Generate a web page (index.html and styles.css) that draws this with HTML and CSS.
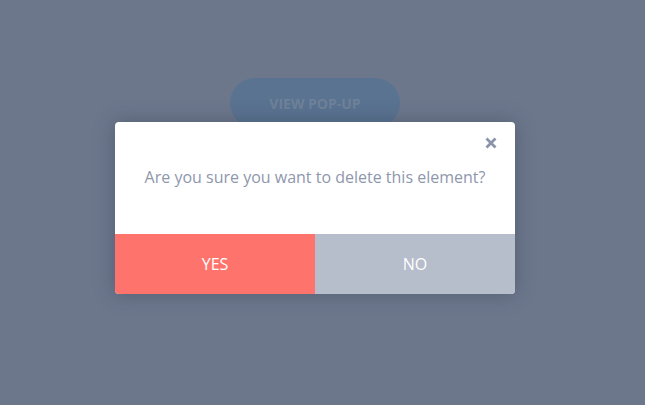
FILE: index.html
```html
<!DOCTYPE html>
<html>
<head>
<meta charset="utf-8">
<link rel="stylesheet" href="styles.css">
</head>
<body>
<div class="page">
  <button class="open-btn">VIEW POP-UP</button>
</div>
<div class="overlay">
  <div class="modal">
    <div class="modal-body">
      <span class="close">
        <svg width="12" height="12" viewBox="0 0 12 12"><path d="M1.5 1.5 L10.5 10.5 M10.5 1.5 L1.5 10.5" stroke="#8a93aa" stroke-width="2.8" stroke-linecap="butt"/></svg>
      </span>
      <p class="message">Are you sure you want to delete this element?</p>
    </div>
    <div class="actions">
      <button class="btn yes">YES</button>
      <button class="btn no">NO</button>
    </div>
  </div>
</div>
</body>
</html>
```
FILE: styles.css
```css
html, body {
  margin: 0;
  padding: 0;
  width: 645px;
  height: 405px;
  overflow: hidden;
  font-family: "Open Sans", "Noto Sans", sans-serif;
}
body {
  background: #6c778c;
  position: relative;
}
.page {
  width: 630px;
  display: flex;
  justify-content: center;
  padding-top: 78px;
}
.open-btn {
  width: 170px;
  height: 50px;
  border: none;
  border-radius: 25px;
  background: #5a7391;
  color: #6f8299;
  font-family: "Open Sans", sans-serif;
  font-weight: 700;
  font-size: 14px;
}
.overlay {
  position: absolute;
  top: 0;
  left: 0;
  width: 630px;
  height: 405px;
  display: flex;
  justify-content: center;
  align-items: flex-start;
  padding-top: 122px;
  box-sizing: border-box;
}
.modal {
  width: 400px;
  background: #fff;
  border-radius: 4px;
  overflow: hidden;
  box-shadow: 0 0 20px rgba(40, 48, 66, 0.35);
}
.modal-body {
  height: 112px;
  position: relative;
  display: flex;
  justify-content: center;
}
.close {
  position: absolute;
  top: 15px;
  right: 18px;
  width: 12px;
  height: 12px;
  display: block;
}
.close svg { display: block; }
.message {
  margin: 44px 0 0;
  font-size: 16px;
  color: #8f97ad;
  line-height: 22px;
}
.actions {
  display: flex;
  height: 60px;
}
.btn {
  flex: 1;
  border: none;
  margin: 0;
  color: #fff;
  font-family: "Open Sans", sans-serif;
  font-size: 16px;
  padding: 0;
}
.yes { background: #fe736b; }
.no { background: #b6bdcb; }
```
